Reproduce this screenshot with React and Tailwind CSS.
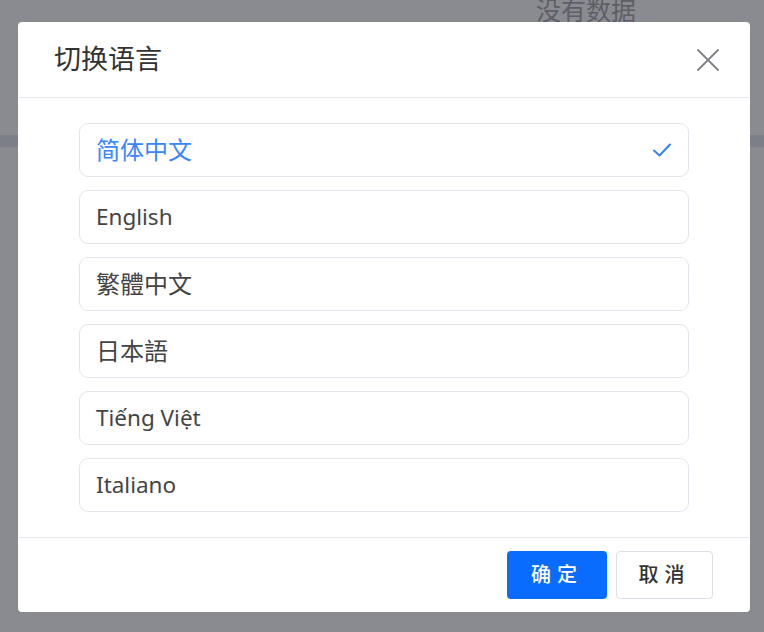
import React, { useState } from "react";

const languages = [
  { label: "简体中文", cjk: true },
  { label: "English" },
  { label: "繁體中文", cjk: true },
  { label: "日本語", cjk: true },
  { label: "Tiếng Việt" },
  { label: "Italiano" },
];

const CheckIcon = () => (
  <svg width="20" height="16" viewBox="0 0 20 16" fill="none">
    <path d="M2 8.5l5.5 5L18 2.5" stroke="#3b82f6" strokeWidth="2" strokeLinecap="round" strokeLinejoin="round" />
  </svg>
);

const CloseIcon = () => (
  <svg width="22" height="22" viewBox="0 0 22 22" fill="none">
    <path d="M1 1l20 20M21 1L1 21" stroke="#808286" strokeWidth="1.8" strokeLinecap="round" />
  </svg>
);

export default function App() {
  const [selected, setSelected] = useState("简体中文");

  return (
    <div
      className="relative h-[632px] w-[764px] overflow-hidden bg-[#8a8b90]"
      style={{ fontFamily: '"Noto Sans", "Noto Sans CJK SC", sans-serif' }}
    >
      {/* page behind the mask */}
      <div className="pl-[536px] text-[25px] leading-[25px] text-[#5c5f66] -mt-[2px]">没有数据</div>
      <div className="mt-[112px] h-[12px] bg-[#7c7f87]" />

      {/* modal */}
      <div className="absolute left-[18px] top-[22px] flex h-[590px] w-[732px] flex-col rounded-[4px] bg-white">
        <div className="flex h-[76px] items-center justify-between border-b border-[#e6e8ee] pl-[36px] pr-[31px]">
          <h2 className="text-[27px] text-[#333]">切换语言</h2>
          <button className="flex h-[22px] w-[22px] items-center justify-center">
            <CloseIcon />
          </button>
        </div>

        <div className="flex flex-col gap-[13px] px-[61px] pt-[25px] pb-[25px]">
          {languages.map((lang) => {
            const active = lang.label === selected;
            return (
              <div
                key={lang.label}
                onClick={() => setSelected(lang.label)}
                className={`flex h-[54px] cursor-pointer items-center justify-between rounded-[9px] border border-[#e2e5ec] pl-[16px] pr-[16px] ${
                  lang.cjk ? "text-[24px]" : "text-[22.5px]"
                } ${active ? "text-[#3a86ff]" : "text-[#444]"}`}
              >
                <span>{lang.label}</span>
                {active && <CheckIcon />}
              </div>
            );
          })}
        </div>

        <div className="flex flex-1 items-center justify-end gap-[9px] border-t border-[#e6e8ee] pr-[37px]">
          <button className="h-[48px] w-[100px] rounded-[4px] bg-[#0a6cff] text-[20px] font-medium tracking-[6px] text-white">
            确定
          </button>
          <button className="h-[48px] w-[97px] rounded-[4px] border border-[#dcdfe6] bg-white text-[20px] font-medium tracking-[6px] text-[#333]">
            取消
          </button>
        </div>
      </div>
    </div>
  );
}
